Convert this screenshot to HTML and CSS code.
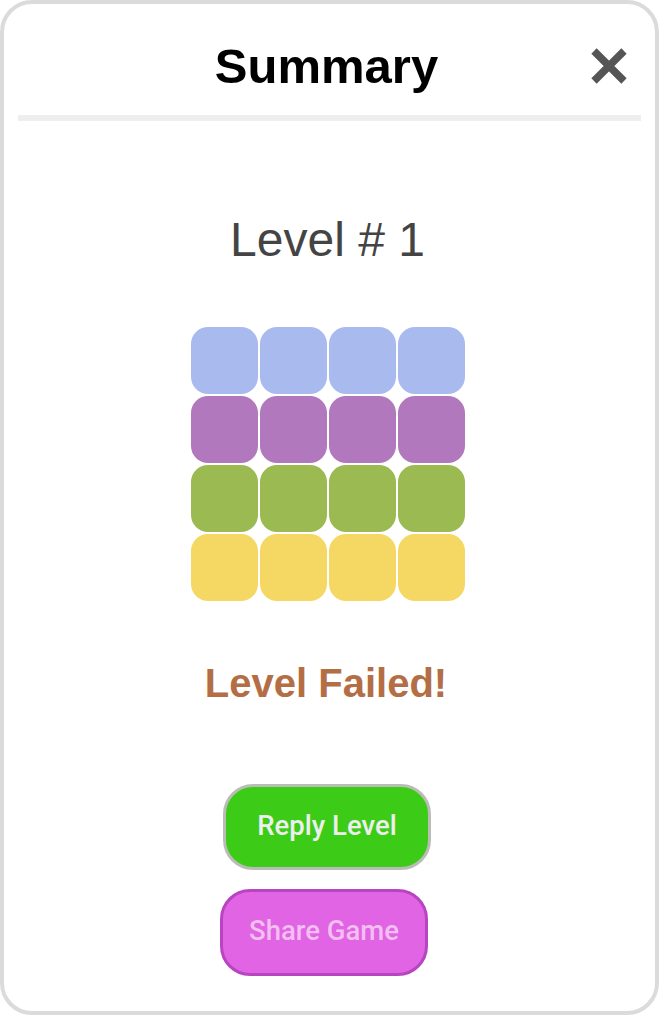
FILE: index.html
```html
<!DOCTYPE html>
<html>
<head>
<meta charset="utf-8">
<link rel="stylesheet" href="styles.css">
</head>
<body>
<div class="frame">
  <header class="header">
    <span></span>
    <h1 class="title">Summary</h1>
    <button class="close" aria-label="Close">
      <svg width="40" height="40" viewBox="0 0 40 40"><path d="M5 5 L35 35 M35 5 L5 35" stroke="#555" stroke-width="7.5" stroke-linecap="butt"/></svg>
    </button>
  </header>
  <div class="divider"></div>
  <div class="level">Level # 1</div>
  <div class="grid">
    <div class="tile blue"></div><div class="tile blue"></div><div class="tile blue"></div><div class="tile blue"></div>
    <div class="tile purple"></div><div class="tile purple"></div><div class="tile purple"></div><div class="tile purple"></div>
    <div class="tile green"></div><div class="tile green"></div><div class="tile green"></div><div class="tile green"></div>
    <div class="tile yellow"></div><div class="tile yellow"></div><div class="tile yellow"></div><div class="tile yellow"></div>
  </div>
  <div class="result">Level Failed!</div>
  <div class="actions">
    <button class="btn reply">Reply Level</button>
    <button class="btn share">Share Game</button>
  </div>
</div>
</body>
</html>
```
FILE: styles.css
```css
html, body {
  margin: 0;
  padding: 0;
  background: #fff;
}
body {
  font-family: "Liberation Sans", Arial, sans-serif;
}
.frame {
  box-sizing: border-box;
  width: 659px;
  height: 1015px;
  border: 4px solid #dcdbdc;
  border-radius: 32px;
  display: flex;
  flex-direction: column;
  align-items: center;
}
.header {
  align-self: stretch;
  height: 111px;
  display: grid;
  grid-template-columns: 1fr auto 1fr;
  align-items: center;
}
.title {
  margin: 0;
  font-size: 49px;
  font-weight: 700;
  color: #000;
  line-height: 1;
  padding-top: 14px;
  margin-right: 6px;
}
.close {
  justify-self: end;
  margin-right: 26px;
  padding: 0;
  border: 0;
  background: none;
  width: 40px;
  height: 40px;
  margin-top: 12px;
}
.close svg { display: block; }
.divider {
  align-self: stretch;
  margin: 0 14px;
  height: 6px;
  background: #eeeeee;
}
.level {
  margin-top: 95px;
  margin-right: 4px;
  font-size: 48px;
  line-height: 48px;
  color: #444;
}
.grid {
  margin-top: 63px;
  margin-right: 3px;
  display: grid;
  grid-template-columns: repeat(4, 67px);
  grid-auto-rows: 67px;
  gap: 2px;
}
.tile { border-radius: 17px; }
.blue { background: #a9bbee; }
.purple { background: #b278be; }
.green { background: #9bba52; }
.yellow { background: #f5d863; }
.result {
  margin-top: 62px;
  margin-right: 7px;
  font-size: 40px;
  line-height: 40px;
  font-weight: 700;
  color: #b36e45;
}
.actions {
  margin-top: 81px;
  display: flex;
  flex-direction: column;
  align-items: center;
  gap: 19px;
}
.btn {
  box-sizing: border-box;
  width: 208px;
  height: 86px;
  border-radius: 30px;
  font-family: Roboto, "Liberation Sans", Arial, sans-serif;
  font-size: 27.5px;
  font-weight: 500;
  padding: 0 0 4px;
}
.reply {
  background: #3ccc18;
  border: 3px solid #b9bdb6;
  color: #eeeeee;
  margin-right: 5px;
}
.share {
  height: 87px;
  background: #e064e4;
  border: 3px solid #b845c0;
  color: #f2bff0;
  margin-right: 11px;
}
```
